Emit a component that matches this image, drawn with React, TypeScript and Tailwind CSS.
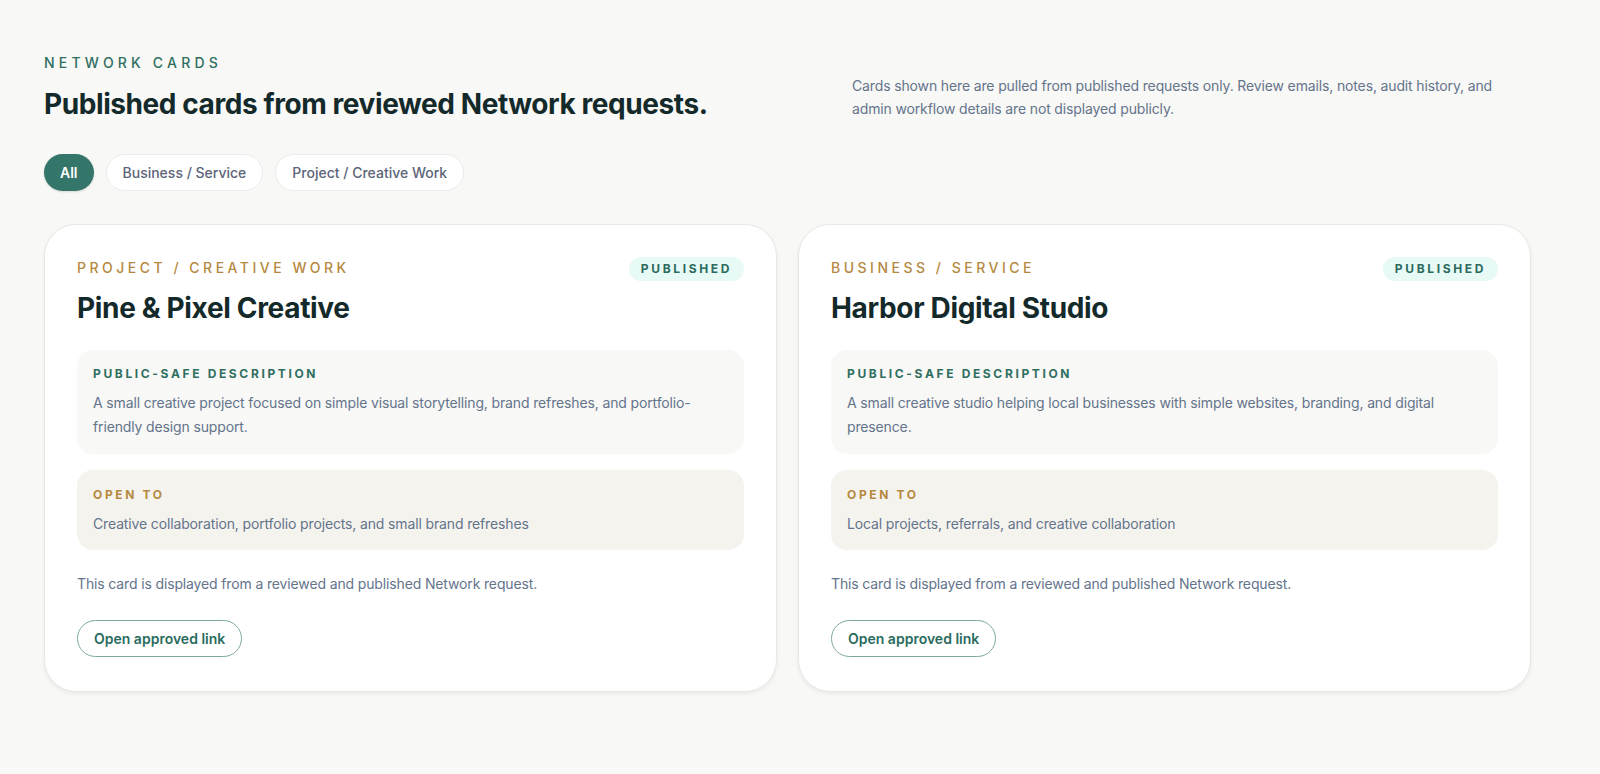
const cards = [
  {
    category: "Project / Creative Work",
    name: "Pine & Pixel Creative",
    description:
      "A small creative project focused on simple visual storytelling, brand refreshes, and portfolio-friendly design support.",
    openTo: "Creative collaboration, portfolio projects, and small brand refreshes",
  },
  {
    category: "Business / Service",
    name: "Harbor Digital Studio",
    description:
      "A small creative studio helping local businesses with simple websites, branding, and digital presence.",
    openTo: "Local projects, referrals, and creative collaboration",
  },
];

export default function App() {
  return (
    <div className="min-h-screen bg-[#f8f8f6] font-['Inter','Liberation_Sans',sans-serif] text-[#14292a]">
      <div className="px-[44px] pt-[53px] w-[1575px]">
        {/* header */}
        <div className="flex justify-between items-start">
          <div>
            <p className="text-sm font-medium uppercase tracking-[0.3em] text-[#2f6f62] leading-5">
              Network cards
            </p>
            <h1 className="mt-[13px] text-[28px] font-bold tracking-[-0.015em] leading-9">
              Published cards from reviewed Network requests.
            </h1>
          </div>
          <p className="w-[679px] pt-[21px] text-sm leading-[23px] tracking-[-0.01em] text-[#64748b]">
            Cards shown here are pulled from published requests only. Review emails, notes, audit history, and admin workflow details are not displayed publicly.
          </p>
        </div>

        {/* filters */}
        <div className="mt-[32px] flex gap-3">
          <button className="h-[37px] px-4 rounded-full bg-[#35766a] text-white text-sm font-semibold shadow-sm">
            All
          </button>
          <button className="h-[37px] px-4 rounded-full bg-white border border-[#ebebe8] text-[#5b6478] text-sm font-medium">
            Business / Service
          </button>
          <button className="h-[37px] px-4 rounded-full bg-white border border-[#ebebe8] text-[#5b6478] text-sm font-medium">
            Project / Creative Work
          </button>
        </div>

        {/* cards */}
        <div className="mt-[33px] grid grid-cols-2 gap-[21px]">
          {cards.map((c) => (
            <div
              key={c.name}
              className="bg-white rounded-[32px] border border-[#e8e8e5] shadow-[0_2px_4px_rgba(0,0,0,0.06)] px-[32px] pt-[32px] pb-[34px]"
            >
              <div className="flex justify-between items-start">
                <p className="text-sm font-medium uppercase tracking-[0.25em] text-[#b5893f] leading-5 pt-px">
                  {c.category}
                </p>
                <span className="h-6 px-[12px] rounded-full bg-[#e8faf5] text-[#2a6b5e] text-xs font-bold uppercase tracking-[0.22em] leading-6">
                  Published
                </span>
              </div>
              <h2 className="mt-[9px] text-[28px] font-bold tracking-[-0.012em] leading-9">
                {c.name}
              </h2>

              <div className="mt-[24px] rounded-[16px] bg-[#f8f8f6] px-4 pt-[16px] pb-[15px]">
                <p className="text-xs font-bold uppercase tracking-[0.22em] text-[#2f6f62] leading-4">
                  Public-safe description
                </p>
                <p className="mt-[9px] text-sm leading-6 tracking-[-0.01em] text-[#64748b]">{c.description}</p>
              </div>

              <div className="mt-4 rounded-[16px] bg-[#f5f3ee] px-4 pt-[17px] pb-[14px]">
                <p className="text-xs font-bold uppercase tracking-[0.22em] text-[#b5893f] leading-4">
                  Open to
                </p>
                <p className="mt-[9px] text-sm leading-6 tracking-[-0.01em] text-[#64748b]">{c.openTo}</p>
              </div>

              <p className="mt-[22px] text-sm leading-6 tracking-[-0.01em] text-[#64748b]">
                This card is displayed from a reviewed and published Network request.
              </p>

              <button className="mt-[24px] h-[37px] px-4 rounded-full border border-[#7fa9a0] text-[#2a6b5e] text-sm font-semibold">
                Open approved link
              </button>
            </div>
          ))}
        </div>
      </div>
    </div>
  );
}
